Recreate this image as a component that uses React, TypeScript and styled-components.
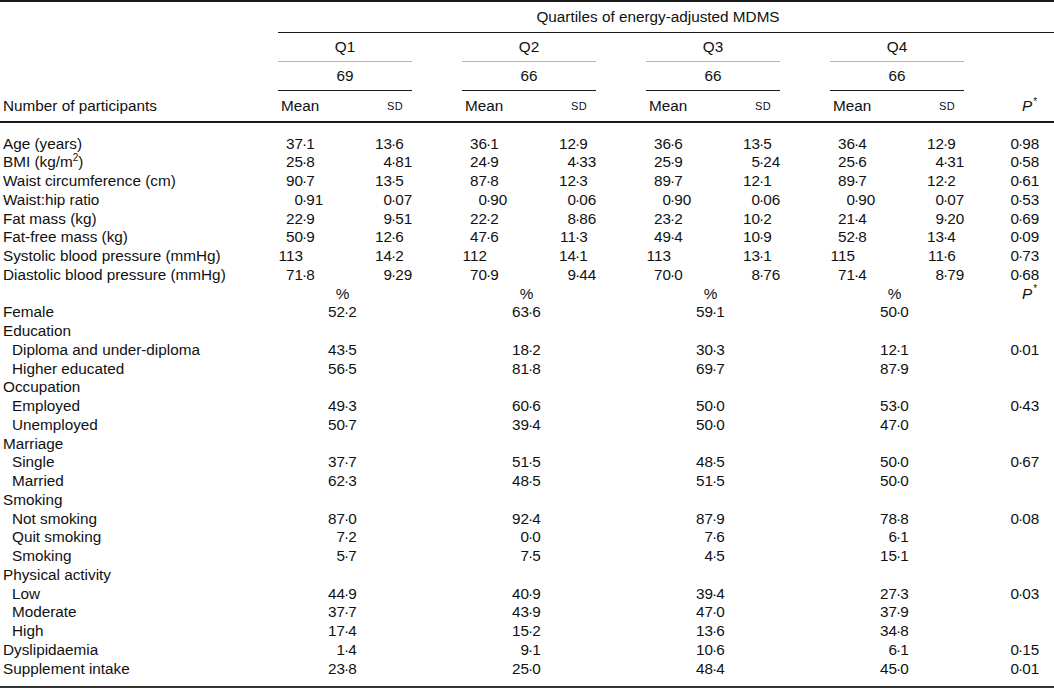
import React from 'react';
import styled, { createGlobalStyle } from 'styled-components';

interface MeanSd {
  mean: string;
  sd: string;
}

interface MeasureRow {
  label: React.ReactNode;
  groups: MeanSd[];
  p: string;
}

interface PercentRow {
  label: string;
  indent?: boolean;
  values?: string[];
  p?: string;
}

const ms = (mean: string, sd: string): MeanSd => ({ mean, sd });

const measureRows: MeasureRow[] = [
  { label: 'Age (years)', groups: [ms('37·1', '13·6'), ms('36·1', '12·9'), ms('36·6', '13·5'), ms('36·4', '12·9')], p: '0·98' },
  {
    label: (
      <>
        BMI (kg/m<sup>2</sup>)
      </>
    ),
    groups: [ms('25·8', '4·81'), ms('24·9', '4·33'), ms('25·9', '5·24'), ms('25·6', '4·31')],
    p: '0·58'
  },
  { label: 'Waist circumference (cm)', groups: [ms('90·7', '13·5'), ms('87·8', '12·3'), ms('89·7', '12·1'), ms('89·7', '12·2')], p: '0·61' },
  { label: 'Waist:hip ratio', groups: [ms('0·91', '0·07'), ms('0·90', '0·06'), ms('0·90', '0·06'), ms('0·90', '0·07')], p: '0·53' },
  { label: 'Fat mass (kg)', groups: [ms('22·9', '9·51'), ms('22·2', '8·86'), ms('23·2', '10·2'), ms('21·4', '9·20')], p: '0·69' },
  { label: 'Fat-free mass (kg)', groups: [ms('50·9', '12·6'), ms('47·6', '11·3'), ms('49·4', '10·9'), ms('52·8', '13·4')], p: '0·09' },
  { label: 'Systolic blood pressure (mmHg)', groups: [ms('113', '14·2'), ms('112', '14·1'), ms('113', '13·1'), ms('115', '11·6')], p: '0·73' },
  { label: 'Diastolic blood pressure (mmHg)', groups: [ms('71·8', '9·29'), ms('70·9', '9·44'), ms('70·0', '8·76'), ms('71·4', '8·79')], p: '0·68' }
];

const percentRows: PercentRow[] = [
  { label: 'Female', values: ['52·2', '63·6', '59·1', '50·0'] },
  { label: 'Education' },
  { label: 'Diploma and under-diploma', indent: true, values: ['43·5', '18·2', '30·3', '12·1'], p: '0·01' },
  { label: 'Higher educated', indent: true, values: ['56·5', '81·8', '69·7', '87·9'] },
  { label: 'Occupation' },
  { label: 'Employed', indent: true, values: ['49·3', '60·6', '50·0', '53·0'], p: '0·43' },
  { label: 'Unemployed', indent: true, values: ['50·7', '39·4', '50·0', '47·0'] },
  { label: 'Marriage' },
  { label: 'Single', indent: true, values: ['37·7', '51·5', '48·5', '50·0'], p: '0·67' },
  { label: 'Married', indent: true, values: ['62·3', '48·5', '51·5', '50·0'] },
  { label: 'Smoking' },
  { label: 'Not smoking', indent: true, values: ['87·0', '92·4', '87·9', '78·8'], p: '0·08' },
  { label: 'Quit smoking', indent: true, values: ['7·2', '0·0', '7·6', '6·1'] },
  { label: 'Smoking', indent: true, values: ['5·7', '7·5', '4·5', '15·1'] },
  { label: 'Physical activity' },
  { label: 'Low', indent: true, values: ['44·9', '40·9', '39·4', '27·3'], p: '0·03' },
  { label: 'Moderate', indent: true, values: ['37·7', '43·9', '47·0', '37·9'] },
  { label: 'High', indent: true, values: ['17·4', '15·2', '13·6', '34·8'] },
  { label: 'Dyslipidaemia', values: ['1·4', '9·1', '10·6', '6·1'], p: '0·15' },
  { label: 'Supplement intake', values: ['23·8', '25·0', '48·4', '45·0'], p: '0·01' }
];

const quartiles = [
  { name: 'Q1', n: 69 },
  { name: 'Q2', n: 66 },
  { name: 'Q3', n: 66 },
  { name: 'Q4', n: 66 }
];

// number aligned on its decimal point, which sits $at px from the cell's left edge
const Num: React.FC<{ value: string; at: number }> = ({ value, at }) => {
  const [int, frac] = value.split('·');
  return (
    <NumWrap>
      <IntPart $w={at}>{int}</IntPart>
      {frac !== undefined && (
        <>
          <Dot>·</Dot>
          {frac}
        </>
      )}
    </NumWrap>
  );
};

const PMark = () => (
  <>
    <em>P</em>
    <Star>*</Star>
  </>
);

const App: React.FC = () => {
  return (
    <>
      <GlobalStyle />
      <Table>
        {/* Header */}
        <HeadRow $h={31}>
          <Label />
          <SpanHead>Quartiles of energy-adjusted MDMS</SpanHead>
        </HeadRow>
        <HeadRow $h={29}>
          <Label />
          <Groups>
            {quartiles.map((q) => (
              <HeadGroup key={q.name} $rule="gray">
                {q.name}
              </HeadGroup>
            ))}
          </Groups>
          <PCol />
        </HeadRow>
        <HeadRow $h={29}>
          <Label />
          <Groups>
            {quartiles.map((q) => (
              <HeadGroup key={q.name} $rule="black">
                {q.n}
              </HeadGroup>
            ))}
          </Groups>
          <PCol />
        </HeadRow>
        <ColumnHeadRow>
          <Label>Number of participants</Label>
          <Groups>
            {quartiles.map((q) => (
              <Group key={q.name}>
                <MeanHead>Mean</MeanHead>
                <SdHead>SD</SdHead>
              </Group>
            ))}
          </Groups>
          <PHead>
            <PMark />
          </PHead>
        </ColumnHeadRow>

        {/* Body */}
        <Body>
          {measureRows.map((row, i) => (
            <Row key={i}>
              <Label>{row.label}</Label>
              <Groups>
                {row.groups.map((g, j) => (
                  <Group key={j}>
                    <Cell>
                      <Num value={g.mean} at={25} />
                    </Cell>
                    <Cell>
                      <Num value={g.sd} at={47} />
                    </Cell>
                  </Group>
                ))}
              </Groups>
              <PCol>
                <Num value={row.p} at={55} />
              </PCol>
            </Row>
          ))}

          <Row>
            <Label />
            <Groups>
              {quartiles.map((q) => (
                <Group key={q.name}>
                  <PercentHead>%</PercentHead>
                </Group>
              ))}
            </Groups>
            <PHead>
              <PMark />
            </PHead>
          </Row>

          {percentRows.map((row) => (
            <Row key={row.label + (row.indent ? '-i' : '')}>
              <Label $indent={row.indent}>{row.label}</Label>
              <Groups>
                {quartiles.map((q, j) => (
                  <Group key={q.name}>
                    <WideCell>{row.values && <Num value={row.values[j]} at={67} />}</WideCell>
                  </Group>
                ))}
              </Groups>
              <PCol>{row.p && <Num value={row.p} at={55} />}</PCol>
            </Row>
          ))}
        </Body>
      </Table>
    </>
  );
};

const GlobalStyle = createGlobalStyle`
  html, body {
    margin: 0;
    padding: 0;
    background: #ffffff;
  }

  body {
    font-family: 'Liberation Sans', Arial, sans-serif;
    font-size: 15.3px;
    color: #111;
  }
`;

const Table = styled.div`
  width: 1054px;
  border-top: 2px solid #1a1a1a;
  border-bottom: 2px solid #333;
  box-sizing: border-box;
`;

const HeadRow = styled.div<{ $h: number }>`
  display: flex;
  height: ${(p) => p.$h}px;
`;

const ColumnHeadRow = styled.div`
  display: flex;
  height: 32px;
  align-items: center;
  border-bottom: 2px solid #1a1a1a;
  box-sizing: border-box;
`;

const Label = styled.div<{ $indent?: boolean }>`
  width: 278px;
  flex: none;
  box-sizing: border-box;
  padding-left: ${(p) => (p.$indent ? 12 : 3)}px;
  white-space: nowrap;

  sup {
    font-size: 10px;
    line-height: 0;
  }
`;

const SpanHead = styled.div`
  flex: 1;
  display: flex;
  align-items: center;
  justify-content: center;
  padding-right: 16px;
  border-bottom: 1px solid #1a1a1a;
`;

const Groups = styled.div`
  display: flex;
  gap: 50px;
  flex: none;
`;

const Group = styled.div`
  width: 134px;
  display: grid;
  grid-template-columns: 67px 67px;
  align-items: center;
`;

const HeadGroup = styled.div<{ $rule: 'gray' | 'black' }>`
  width: 134px;
  display: flex;
  align-items: center;
  justify-content: center;
  box-sizing: border-box;
  border-bottom: 1px solid ${(p) => (p.$rule === 'gray' ? '#b4b4b4' : '#1a1a1a')};
`;

const MeanHead = styled.div`
  padding-left: 3px;
`;

const SdHead = styled.div`
  text-align: right;
  padding-right: 9px;
  font-size: 11px;
  letter-spacing: 0.4px;
`;

const PercentHead = styled.div`
  grid-column: 1 / -1;
  text-align: center;
  padding-right: 5px;
`;

const PCol = styled.div`
  flex: 1;
  white-space: nowrap;
`;

const PHead = styled.div`
  flex: 1;
  padding-left: 58px;
`;

const Star = styled.sup`
  font-size: 10px;
  line-height: 0;
  margin-left: 1px;
`;

const Body = styled.div`
  padding: 11.5px 0 7.25px;
`;

const Row = styled.div`
  display: flex;
  height: 18.75px;
  line-height: 18.75px;
`;

const Cell = styled.div`
  white-space: nowrap;
`;

const WideCell = styled.div`
  grid-column: 1 / -1;
  white-space: nowrap;
`;

const NumWrap = styled.span`
  white-space: nowrap;
`;

const IntPart = styled.span<{ $w: number }>`
  display: inline-block;
  width: ${(p) => p.$w}px;
  text-align: right;
`;

const Dot = styled.span`
  display: inline-block;
  margin: 0 -0.9px;
`;

export default App;
